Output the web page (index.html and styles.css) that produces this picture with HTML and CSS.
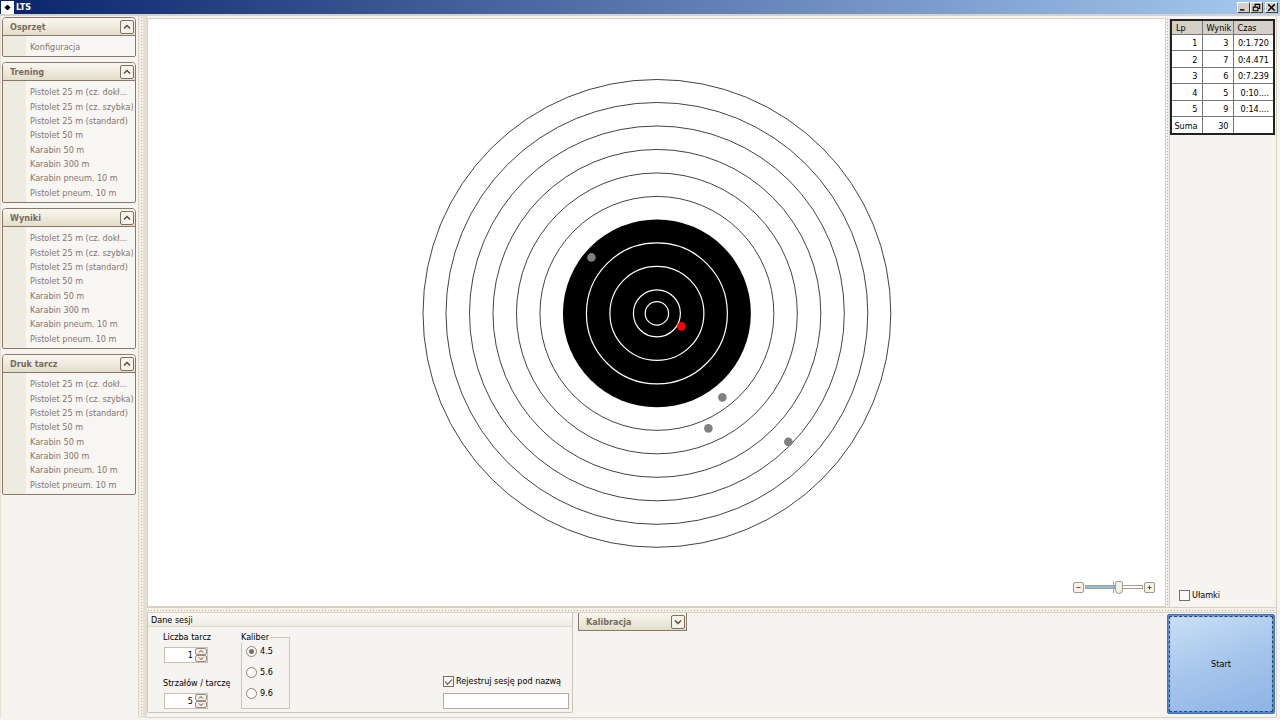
FILE: index.html
```html
<!DOCTYPE html>
<html lang="pl">
  <head>
    <meta charset="UTF-8" />
    <meta name="viewport" content="width=device-width, initial-scale=1.0" />
    <title>LTS</title>
    <link rel="stylesheet" href="styles.css">
  </head>
  <body>
    <header class="titlebar">
      <svg class="app-icon" viewBox="0 0 13 13"><rect width="13" height="13" fill="#fff" /><path d="M6.500 4l2.500 2.500-2.500 2.500-2.500-2.500z" stroke="#000" stroke-linejoin="round" /></svg>
      <h1>LTS</h1>
      <div class="window-buttons">
        <button aria-label="Minimalizuj"><svg viewBox="0 0 12 10"><path d="M2 7.5h5" stroke="#000" stroke-width="1.5" /></svg></button>
        <button aria-label="Przywróć"><svg viewBox="0 0 12 10"><path d="M4.5 4V1.5h5v4.500h-2M4 1.500h6M2.500 4.500h5v4h-5zM2 4.500h6" fill="none" stroke="#000" stroke-width="1.2" /></svg></button>
        <button class="close" aria-label="Zamknij"><svg viewBox="0 0 12 10"><path d="M2.500 1.500l7 7M9.500 1.500l-7 7" stroke="#000" stroke-width="1.600" /></svg></button>
      </div>
    </header>

    <div class="window">
      <nav class="sidebar">
        <section class="group">
          <div class="group-header">
            <h2>Osprzęt</h2>
            <button class="toggle" aria-label="Zwiń Osprzęt"><svg viewBox="0 0 12 12"><path d="M3 7.500l3-3 3 3" /></svg></button>
          </div>
          <ul class="short">
            <li><a href="#">Konfiguracja</a></li>
          </ul>
        </section>
        <section class="group">
          <div class="group-header">
            <h2>Trening</h2>
            <button class="toggle" aria-label="Zwiń Trening"><svg viewBox="0 0 12 12"><path d="M3 7.500l3-3 3 3" /></svg></button>
          </div>
          <ul>
            <li><a href="#">Pistolet 25 m (cz. dokł...</a></li>
            <li><a href="#">Pistolet 25 m (cz. szybka)</a></li>
            <li><a href="#">Pistolet 25 m (standard)</a></li>
            <li><a href="#">Pistolet 50 m</a></li>
            <li><a href="#">Karabin 50 m</a></li>
            <li><a href="#">Karabin 300 m</a></li>
            <li><a href="#">Karabin pneum. 10 m</a></li>
            <li><a href="#">Pistolet pneum. 10 m</a></li>
          </ul>
        </section>
        <section class="group">
          <div class="group-header">
            <h2>Wyniki</h2>
            <button class="toggle" aria-label="Zwiń Wyniki"><svg viewBox="0 0 12 12"><path d="M3 7.500l3-3 3 3" /></svg></button>
          </div>
          <ul>
            <li><a href="#">Pistolet 25 m (cz. dokł...</a></li>
            <li><a href="#">Pistolet 25 m (cz. szybka)</a></li>
            <li><a href="#">Pistolet 25 m (standard)</a></li>
            <li><a href="#">Pistolet 50 m</a></li>
            <li><a href="#">Karabin 50 m</a></li>
            <li><a href="#">Karabin 300 m</a></li>
            <li><a href="#">Karabin pneum. 10 m</a></li>
            <li><a href="#">Pistolet pneum. 10 m</a></li>
          </ul>
        </section>
        <section class="group">
          <div class="group-header">
            <h2>Druk tarcz</h2>
            <button class="toggle" aria-label="Zwiń Druk tarcz"><svg viewBox="0 0 12 12"><path d="M3 7.500l3-3 3 3" /></svg></button>
          </div>
          <ul>
            <li><a href="#">Pistolet 25 m (cz. dokł...</a></li>
            <li><a href="#">Pistolet 25 m (cz. szybka)</a></li>
            <li><a href="#">Pistolet 25 m (standard)</a></li>
            <li><a href="#">Pistolet 50 m</a></li>
            <li><a href="#">Karabin 50 m</a></li>
            <li><a href="#">Karabin 300 m</a></li>
            <li><a href="#">Karabin pneum. 10 m</a></li>
            <li><a href="#">Pistolet pneum. 10 m</a></li>
          </ul>
        </section>
      </nav>

      <div class="splitter vertical wide"></div>

      <div class="content">
        <div class="top">
          <main class="canvas">
            <svg class="target" viewBox="0 0 469 469">
              <g fill="none" stroke="#111" stroke-width="0.8">
                <circle cx="234" cy="234.500" r="234" />
                <circle cx="234" cy="234.500" r="211" />
                <circle cx="234" cy="234.500" r="187.500" />
                <circle cx="234" cy="234.500" r="164" />
                <circle cx="234" cy="234.500" r="140.500" />
                <circle cx="234" cy="234.500" r="117" />
              </g>
              <circle cx="234" cy="234.500" r="94" />
              <g fill="none" stroke="#fff" stroke-width="1.200">
                <circle cx="234" cy="234.500" r="70.500" />
                <circle cx="234" cy="234.500" r="47" />
                <circle cx="234" cy="234.500" r="23.500" />
                <circle cx="234" cy="234.500" r="11.700" />
              </g>
              <g fill="#808080">
                <circle cx="168.500" cy="178.500" r="4.300" />
                <circle cx="299.500" cy="318.500" r="4.300" />
                <circle cx="285.500" cy="349.500" r="4.300" />
                <circle cx="365.500" cy="363" r="4.300" />
              </g>
              <circle cx="258.500" cy="247.500" r="4.300" fill="#f00" />
            </svg>
            <div class="zoom">
              <button aria-label="Pomniejsz"><svg viewBox="0 0 9 9"><path d="M2.500 4.500h4" /></svg></button>
              <input type="range" min="0" max="100" value="60" aria-label="Powiększenie" />
              <button aria-label="Powiększ"><svg viewBox="0 0 9 9"><path d="M2.500 4.500h4M4.500 2.500v4" /></svg></button>
            </div>
          </main>
          <div class="splitter vertical"></div>
          <aside class="results">
            <table>
              <thead>
                <tr><th class="lp">Lp</th><th class="score">Wynik</th><th>Czas</th></tr>
              </thead>
              <tbody>
                <tr><td>1</td><td>3</td><td>0:1.720</td></tr>
                <tr><td>2</td><td>7</td><td>0:4.471</td></tr>
                <tr><td>3</td><td>6</td><td>0:7.239</td></tr>
                <tr><td>4</td><td>5</td><td>0:10....</td></tr>
                <tr><td>5</td><td>9</td><td>0:14....</td></tr>
                <tr><td>Suma</td><td>30</td><td></td></tr>
              </tbody>
            </table>
            <label class="check"><input type="checkbox" />Ułamki</label>
          </aside>
        </div>

        <div class="splitter horizontal"></div>

        <div class="bottom">
          <section class="session">
            <h3>Dane sesji</h3>
            <div class="session-body">
              <div class="numbers">
                <div class="field">
                  <label for="targets">Liczba tarcz</label>
                  <div class="spinner">
                    <input type="number" id="targets" value="1" />
                    <div class="spin-buttons">
                      <button aria-label="Więcej tarcz"><svg viewBox="0 0 10 5"><path d="M3 3.500l2-2 2 2" /></svg></button>
                      <button aria-label="Mniej tarcz"><svg viewBox="0 0 10 5"><path d="M3 1.500l2 2 2-2" /></svg></button>
                    </div>
                  </div>
                </div>
                <div class="field">
                  <label for="shots">Strzałów / tarczę</label>
                  <div class="spinner">
                    <input type="number" id="shots" value="5" />
                    <div class="spin-buttons">
                      <button aria-label="Więcej strzałów"><svg viewBox="0 0 10 5"><path d="M3 3.500l2-2 2 2" /></svg></button>
                      <button aria-label="Mniej strzałów"><svg viewBox="0 0 10 5"><path d="M3 1.500l2 2 2-2" /></svg></button>
                    </div>
                  </div>
                </div>
              </div>
              <fieldset>
                <legend>Kaliber</legend>
                <label><input type="radio" name="caliber" checked />4.5</label>
                <label><input type="radio" name="caliber" />5.6</label>
                <label><input type="radio" name="caliber" />9.6</label>
              </fieldset>
              <div class="register">
                <label class="check"><input type="checkbox" checked />Rejestruj sesję pod nazwą</label>
                <input type="text" aria-label="Nazwa sesji" />
              </div>
            </div>
          </section>
          <section class="calibration">
            <div class="group-header">
              <h2>Kalibracja</h2>
              <button class="toggle" aria-label="Rozwiń Kalibracja"><svg viewBox="0 0 12 12"><path d="M3 4.500l3 3 3-3" /></svg></button>
            </div>
          </section>
          <button class="start"><span>Start</span></button>
        </div>
      </div>
    </div>
  </body>
</html>
```
FILE: styles.css
```css
* {
  box-sizing: border-box;
}

body {
  margin: 0;
  height: 100vh;
  display: flex;
  flex-direction: column;
  font-family: "DejaVu Sans Condensed", "DejaVu Sans", sans-serif;
  font-size: 9px;
  line-height: 12px;
  color: #000;
  background-color: #f6f4f1;
  overflow: hidden;
}

button,
input {
  font: inherit;
  color: inherit;
  margin: 0;
  padding: 0;
}

h1,
h2,
h3,
ul {
  margin: 0;
  padding: 0;
}

svg {
  display: block;
}

.titlebar {
  display: flex;
  align-items: center;
  flex: none;
  gap: 2px;
  height: 14px;
  padding: 0 2px 0 1px;
  background: linear-gradient(to right, #0a246a, #a6caf0);
}

.app-icon {
  width: 13px;
  height: 13px;
}

.titlebar h1 {
  flex: 1;
  color: #fff;
  font-size: 9px;
}

.window-buttons {
  display: flex;
}

.window-buttons button {
  width: 13px;
  height: 11px;
  background-color: #d4d0c8;
  border: 1px solid;
  border-color: #fff #404040 #404040 #fff;
}

.window-buttons .close {
  margin-left: 2px;
}

.window {
  display: flex;
  flex: 1;
  min-height: 0;
  border-top: 2px solid #d8d3ca;
  padding: 0 3px 2px 0;
}

.sidebar {
  width: 138px;
  flex: none;
  display: flex;
  flex-direction: column;
  gap: 5px;
  padding: 1px 2px 1px 1px;
  border-left: 1px solid #e6e0d2;
}

.group {
  border: 1px solid #8b7769;
  border-radius: 4px 4px 2px 2px;
  overflow: hidden;
}

.group-header {
  display: flex;
  align-items: center;
  justify-content: space-between;
  height: 18px;
  padding: 0 1px 0 7px;
  border-bottom: 1px solid #8b7769;
  background: linear-gradient(#f9f7f0, #e3decb);
}

.group-header h2 {
  font-size: 9px;
  color: #79695e;
}

.toggle {
  width: 14px;
  height: 14px;
  border: 1px solid #806e62;
  border-radius: 2px;
  background-color: #f6f3ea;
}

.toggle path {
  fill: none;
  stroke: #5c4c43;
  stroke-width: 1.5;
}

.group ul {
  display: flex;
  flex-direction: column;
  height: 121px;
  padding: 4px 0 2px 27px;
  list-style: none;
  background: linear-gradient(to right, #eeebe0 23px, #f8f6f3 23px);
}

.group .short {
  height: 20px;
}

.group li {
  display: flex;
  align-items: center;
  flex: 1;
}

.group a {
  color: #86756b;
  text-decoration: none;
  white-space: nowrap;
}

.splitter {
  flex: none;
  border: 0 solid #d8d1c2;
  background-color: #f4f0e8;
}

.vertical {
  width: 5px;
  background: radial-gradient(circle, #b9ad9d 1px, transparent 1px) center 0 / 3px 3px repeat-y #f4f0e8;
  border-left-width: 1px;
  border-right-width: 1px;
}

.wide {
  width: 9px;
  border-right: 4px solid #e5dfd3;
}

.horizontal {
  height: 6px;
  background: radial-gradient(circle, #b9ad9d 1px, transparent 1px) 0 center / 3px 3px repeat-x #f4f0e8;
  border-top-width: 1px;
  border-bottom-width: 1px;
}

.content {
  flex: 1;
  min-width: 0;
  display: flex;
  flex-direction: column;
  padding-top: 2px;
  border-right: 1px solid #d8d1c2;
  border-bottom: 1px solid #d8d1c2;
}

.top {
  display: flex;
  flex: 1;
  min-height: 0;
}

.canvas {
  position: relative;
  display: flex;
  align-items: center;
  justify-content: center;
  flex: 1;
  padding: 1px 0 0 1px;
  border: 1px solid #d8d1c2;
  border-right: none;
  background-color: #fff;
}

.target {
  height: 80%;
  overflow: visible;
}

.zoom {
  position: absolute;
  right: 10px;
  bottom: 12px;
  display: flex;
  align-items: center;
  gap: 1px;
}

.zoom button {
  width: 11px;
  height: 11px;
  border: 1px solid #a4978c;
  border-radius: 2px;
  background-color: #f6f1e7;
}

.zoom path {
  fill: none;
  stroke: #67574c;
}

.zoom input {
  appearance: none;
  width: 58px;
  height: 14px;
  background:
    linear-gradient(#a99c91, #a99c91) 28px center / 1px 12px no-repeat,
    linear-gradient(to right, #8dbfe0 32px, #fff 32px) center / 56px 2px no-repeat,
    linear-gradient(#a99c91, #a99c91) center / 58px 4px no-repeat;
}

.zoom input::-webkit-slider-thumb {
  appearance: none;
  width: 8px;
  height: 13px;
  border: 1px solid #a4978c;
  border-radius: 2px 2px 4px 4px;
  background-color: #f6f1e7;
}

.results {
  width: 106px;
  flex: none;
  display: flex;
  flex-direction: column;
  justify-content: space-between;
  padding: 1px 1px 6px 0;
}

.results table {
  width: 105px;
  height: 116px;
  table-layout: fixed;
  border-collapse: collapse;
  border: 2px solid #222;
  background-color: #fff;
}

.results th,
.results td {
  padding: 1px 4px 0 0;
  border: 1px solid #777;
  text-align: right;
  white-space: nowrap;
}

.results th {
  padding: 1px 0 0 4px;
  font-weight: normal;
  text-align: left;
  background-color: #d4d0c8;
}

.lp {
  width: 31px;
}

.score {
  width: 31px;
}

.check {
  display: flex;
  align-items: center;
  gap: 2px;
  white-space: nowrap;
}

.results .check {
  padding-left: 9px;
}

input[type="checkbox"] {
  appearance: none;
  width: 11px;
  height: 11px;
  border: 1px solid #806e62;
  background-color: #fbfaf8;
}

input[type="checkbox"]:checked::before {
  content: "";
  display: block;
  width: 6px;
  height: 3px;
  margin: 2px 1px;
  border: solid #5c4c43;
  border-width: 0 0 1px 1px;
  transform: rotate(-45deg);
}

.bottom {
  display: flex;
  flex: none;
  height: 104px;
  padding: 0 1px 2px 0;
}

.session {
  display: flex;
  flex-direction: column;
  width: 426px;
  height: 100px;
  border: 1px solid #cbc4b8;
  border-top: none;
  border-radius: 0 0 2px 2px;
}

.session h3 {
  height: 14px;
  padding: 1px 3px;
  font-size: 9px;
  font-weight: normal;
  border-bottom: 1px solid #ded8cb;
  background: linear-gradient(#fbfaf7, #f0ece3);
}

.session-body {
  display: flex;
  flex: 1;
  padding: 4px 3px 3px 15px;
}

.numbers {
  display: flex;
  flex-direction: column;
  justify-content: space-between;
  width: 78px;
}

.field {
  display: flex;
  flex-direction: column;
  gap: 4px;
  white-space: nowrap;
}

.spinner {
  display: flex;
  width: 44px;
  height: 16px;
  margin-left: 1px;
  border: 1px solid #c6bfb4;
  background-color: #fff;
}

.spinner input {
  flex: 1;
  min-width: 0;
  padding-right: 2px;
  border: none;
  background: none;
  text-align: right;
  appearance: textfield;
}

.spinner input::-webkit-inner-spin-button {
  appearance: none;
}

.spin-buttons {
  display: flex;
  flex-direction: column;
  width: 12px;
}

.spin-buttons button {
  flex: 1;
  border: 1px solid #9b8c80;
  border-radius: 2px;
  background-color: #f3ede4;
}

.spin-buttons path {
  fill: none;
  stroke: #5c4c43;
}

fieldset {
  display: flex;
  flex-direction: column;
  justify-content: space-between;
  width: 49px;
  margin: 0;
  padding: 2px 4px 9px;
  border: 1px solid #cbc4b8;
}

legend {
  margin-left: -5px;
  padding: 0 1px 0 0;
}

fieldset label {
  display: flex;
  align-items: center;
  gap: 3px;
}

input[type="radio"] {
  appearance: none;
  width: 11px;
  height: 11px;
  border: 1px solid #8f8176;
  border-radius: 50%;
  background-color: #fbfaf8;
}

input[type="radio"]:checked {
  background: radial-gradient(circle, #7d6e64 2px, #fbfaf8 3px);
}

.register {
  display: flex;
  flex-direction: column;
  justify-content: flex-end;
  gap: 6px;
  width: 126px;
  margin-left: auto;
}

.register input[type="text"] {
  height: 16px;
  border: 1px solid #b5aca0;
}

.calibration {
  width: 109px;
  margin-left: 5px;
}

.calibration .group-header {
  border: 1px solid #8b7769;
  border-top: none;
}

.start {
  width: 108px;
  margin: 1px 0 1px auto;
  padding: 1px;
  border: 1px solid #3f72bd;
  border-radius: 2px;
  background: linear-gradient(160deg, #cbe0f6, #a5c5eb 50%, #8db2e5);
  box-shadow: inset 0 0 2px 1px #3f72bd;
}

.start span {
  display: flex;
  align-items: center;
  justify-content: center;
  height: 100%;
  border: 1px dashed #26496f;
}
```
